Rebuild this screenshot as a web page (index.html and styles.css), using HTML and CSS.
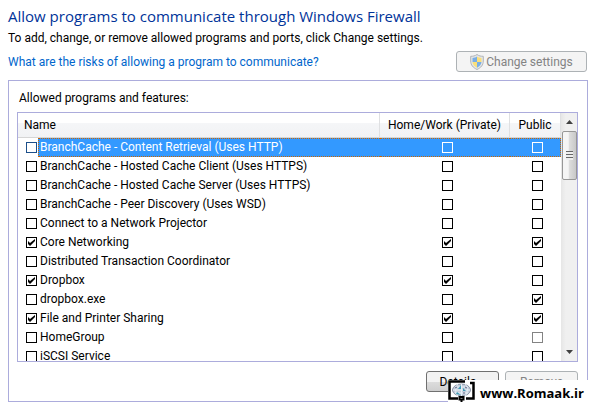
FILE: index.html
```html
<!DOCTYPE html>
<html lang="en">
<head>
    <meta charset="UTF-8">
    <meta name="viewport" content="width=device-width, initial-scale=1.0">
    <title>Allowed Programs</title>
    <link rel="stylesheet" href="styles.css">
</head>
<body>
    <main class="page">
        <h1>Allow programs to communicate through Windows Firewall</h1>
        <p class="intro">To add, change, or remove allowed programs and ports, click Change settings.</p>

        <div class="toolbar">
            <a class="help" href="#risks">What are the risks of allowing a program to communicate?</a>
            <button class="btn change" type="button" disabled>
                <svg class="shield" viewBox="0 0 14 16" aria-hidden="true">
                    <path d="M7 .5C5 2 3 2.300 .7 2.300V7c0 4 2.300 6.600 6.300 8.500 4-1.900 6.300-4.500 6.300-8.500V2.300C11 2.300 9 2 7 .5z" fill="#e4e6e8" stroke="#b0b4b8"/>
                    <path d="M7 2.500C5.500 3.500 4.200 3.800 2.500 3.900V8H7z" fill="#78aee6"/>
                    <path d="M7 2.500c1.500 1 2.800 1.300 4.500 1.400V8H7z" fill="#fbdf79"/>
                    <path d="M2.500 8H7v5.700C4.300 12.300 2.700 10.600 2.500 8z" fill="#fbdf79"/>
                    <path d="M11.500 8H7v5.700c2.700-1.400 4.300-3.100 4.500-5.700z" fill="#78aee6"/>
                </svg>
                <span>Change settings</span>
            </button>
        </div>

        <section class="panel">
            <h2 id="listTitle">Allowed programs and features:</h2>
            <div class="list">
                <table aria-labelledby="listTitle">
                    <thead>
                        <tr><th>Name</th><th class="private">Home/Work (Private)</th><th class="public">Public</th></tr>
                    </thead>
                    <tbody>
                        <tr class="selected">
                            <td><label><input type="checkbox"><span>BranchCache - Content Retrieval (Uses HTTP)</span></label></td>
                            <td><input type="checkbox" aria-label="Private"></td>
                            <td><input type="checkbox" aria-label="Public"></td>
                        </tr>
                        <tr>
                            <td><label><input type="checkbox"><span>BranchCache - Hosted Cache Client (Uses HTTPS)</span></label></td>
                            <td><input type="checkbox" aria-label="Private"></td>
                            <td><input type="checkbox" aria-label="Public"></td>
                        </tr>
                        <tr>
                            <td><label><input type="checkbox"><span>BranchCache - Hosted Cache Server (Uses HTTPS)</span></label></td>
                            <td><input type="checkbox" aria-label="Private"></td>
                            <td><input type="checkbox" aria-label="Public"></td>
                        </tr>
                        <tr>
                            <td><label><input type="checkbox"><span>BranchCache - Peer Discovery (Uses WSD)</span></label></td>
                            <td><input type="checkbox" aria-label="Private"></td>
                            <td><input type="checkbox" aria-label="Public"></td>
                        </tr>
                        <tr>
                            <td><label><input type="checkbox"><span>Connect to a Network Projector</span></label></td>
                            <td><input type="checkbox" aria-label="Private"></td>
                            <td><input type="checkbox" aria-label="Public"></td>
                        </tr>
                        <tr>
                            <td><label><input type="checkbox" checked><span>Core Networking</span></label></td>
                            <td><input type="checkbox" aria-label="Private" checked></td>
                            <td><input type="checkbox" aria-label="Public" checked></td>
                        </tr>
                        <tr>
                            <td><label><input type="checkbox"><span>Distributed Transaction Coordinator</span></label></td>
                            <td><input type="checkbox" aria-label="Private"></td>
                            <td><input type="checkbox" aria-label="Public"></td>
                        </tr>
                        <tr>
                            <td><label><input type="checkbox" checked><span>Dropbox</span></label></td>
                            <td><input type="checkbox" aria-label="Private" checked></td>
                            <td><input type="checkbox" aria-label="Public"></td>
                        </tr>
                        <tr>
                            <td><label><input type="checkbox"><span>dropbox.exe</span></label></td>
                            <td><input type="checkbox" aria-label="Private"></td>
                            <td><input type="checkbox" aria-label="Public" checked></td>
                        </tr>
                        <tr>
                            <td><label><input type="checkbox" checked><span>File and Printer Sharing</span></label></td>
                            <td><input type="checkbox" aria-label="Private" checked></td>
                            <td><input type="checkbox" aria-label="Public" checked></td>
                        </tr>
                        <tr>
                            <td><label><input type="checkbox"><span>HomeGroup</span></label></td>
                            <td><input type="checkbox" aria-label="Private"></td>
                            <td><input type="checkbox" aria-label="Public" disabled></td>
                        </tr>
                        <tr>
                            <td><label><input type="checkbox"><span>iSCSI Service</span></label></td>
                            <td><input type="checkbox" aria-label="Private"></td>
                            <td><input type="checkbox" aria-label="Public"></td>
                        </tr>
                    </tbody>
                </table>
                <div class="scrollbar" aria-hidden="true">
                    <svg class="arrow" viewBox="0 0 7 4"><path d="M0 4L3.500 0L7 4z"/></svg>
                    <div class="thumb"></div>
                    <svg class="arrow down" viewBox="0 0 7 4"><path d="M0 0L3.500 4L7 0z"/></svg>
                </div>
            </div>
            <div class="actions">
                <button class="btn" type="button">Details...</button>
                <button class="btn" type="button" disabled>Remove</button>
            </div>
        </section>

        <div class="watermark">
            <svg class="logo" viewBox="0 0 27 22" aria-hidden="true">
                <path d="M17 1.500H1.500V18.500H10M22 3H25.500V18.500H18" fill="none" stroke="#000" stroke-width="2.500"/>
                <ellipse cx="13.500" cy="10" rx="9" ry="6" fill="#c3ccda" stroke="#8993a5"/>
                <path d="M5 10h17M7 7h13M7 13h13M13.500 4v12M10 4c-3 3-3 9 0 12M17 4c3 3 3 9 0 12" fill="none" stroke="#e9f1f7"/>
                <path d="M13 5l-3 4h3zM15 8l3 3h-3zM9 12l4 3-5-1z" fill="#3e9cb6"/>
                <path d="M7 8l2-1M17 7l2 1M15 13l2 0" stroke="#5c6486"/>
                <path d="M11.500 17h4v2.500h-4zM13.500 19v3" fill="#fff" stroke="#000" stroke-width="2"/>
            </svg>
            <span>www.Romaak.ir</span>
        </div>
    </main>
</body>
</html>
```
FILE: styles.css
```css
* {
    box-sizing: border-box;
}
body {
    margin: 0;
    background: #fff;
    color: #000;
    font-family: Roboto, "Segoe UI", sans-serif;
    font-size: 12px;
    line-height: 18px;
}
.page {
    position: relative;
    min-height: 100vh;
    padding: 4px 5px 5px 8px;
}
h1 {
    margin: 0;
    color: #003399;
    font-family: "Open Sans", "Segoe UI", sans-serif;
    font-size: 15px;
    font-weight: normal;
    line-height: 24px;
}
.intro {
    margin: 1px 0 4px;
}
.toolbar {
    display: flex;
    justify-content: space-between;
    align-items: center;
    height: 21px;
    margin-right: 1px;
}
.help {
    color: #0066cc;
    text-decoration: none;
}
.btn {
    display: flex;
    justify-content: center;
    align-items: center;
    width: 73px;
    height: 21px;
    padding: 0;
    border: 1px solid #707070;
    border-radius: 3px;
    background: linear-gradient(#f2f2f2 50%, #dddddd 50%, #cfcfcf);
    color: #000;
    font: inherit;
}
.btn:disabled {
    border-color: #adb2b5;
    background: #f4f4f4;
    color: #838383;
}
.change {
    gap: 2px;
    width: 131px;
}
.shield {
    width: 14px;
    height: 16px;
}
.panel {
    margin-top: 8px;
    padding: 8px 9px 9px 8px;
    border: 1px solid #acacdc;
}
h2 {
    margin: 0 2px 5px;
    font-size: 12px;
    font-weight: normal;
    line-height: 18px;
}
.list {
    display: flex;
    height: 250px;
    border: 1px solid #acacdc;
    overflow: hidden;
}
table {
    flex: 1;
    align-self: flex-start;
    table-layout: fixed;
    border-spacing: 0;
}
th {
    height: 25px;
    padding: 0 6px;
    border-right: 1px solid #dfe0e2;
    border-bottom: 1px solid #d5d5d5;
    background: linear-gradient(#fff 40%, #f5f6f8 40%, #f1f2f4);
    font-weight: normal;
    text-align: left;
    white-space: nowrap;
}
.private {
    width: 130px;
    padding: 0;
    text-align: center;
}
.public {
    width: 51px;
    padding: 0;
    text-align: center;
}
td {
    height: 19px;
    padding: 0 0 0 4px;
    line-height: 19px;
}
td:first-child {
    padding-left: 8px;
}
label {
    display: flex;
    align-items: center;
}
label span {
    flex: 1;
    height: 19px;
    margin-left: 1px;
    padding-left: 2px;
    white-space: nowrap;
}
input {
    appearance: none;
    display: block;
    width: 11px;
    height: 11px;
    margin: 0 auto;
    border: 1px solid #000;
    background: #fff;
}
label input {
    margin: 0;
}
input:checked {
    background: #fff url("data:image/svg+xml,%3Csvg xmlns='http://www.w3.org/2000/svg' viewBox='0 0 9 9'%3E%3Cpath d='M1 3v3l2 2 5-5V1L3 5z'/%3E%3C/svg%3E");
}
input:disabled {
    border-color: #838383;
}
.selected td {
    border: 1px dotted #cc6600;
    border-width: 1px 0;
    background: #3399ff;
    color: #fff;
    line-height: 17px;
}
.selected td:first-child {
    border: 0;
    background: #fff;
}
.selected label span {
    padding-left: 1px;
    border: 1px dotted #cc6600;
    border-right: 0;
    background: #3399ff;
}
.selected td:last-child {
    border-right-width: 1px;
}
.selected input {
    border-color: #fff;
    background: #3399ff;
}
.selected label input {
    border-color: #1c4f8a;
    background: #fff;
}
.scrollbar {
    display: flex;
    flex-direction: column;
    align-items: center;
    width: 16px;
    padding: 7px 0;
    background: linear-gradient(90deg, #e6e6e6, #f0f0f0 30%, #f0f0f0);
}
.arrow {
    width: 7px;
    height: 4px;
    fill: #404040;
}
.down {
    margin-top: auto;
}
.thumb {
    width: 15px;
    height: 49px;
    margin-top: 7px;
    border: 1px solid #979797;
    border-radius: 2px;
    background:
        repeating-linear-gradient(#666 0 1px, #eee 1px 3px) center / 7px 9px no-repeat,
        linear-gradient(90deg, #f5f5f5 40%, #dcdcdc 50%, #c8c8c8);
}
.actions {
    display: flex;
    justify-content: flex-end;
    gap: 6px;
    margin-top: 9px;
}
.watermark {
    position: absolute;
    right: 0;
    bottom: 0;
    display: flex;
    gap: 5px;
    width: 145px;
    height: 27px;
    background: #fff;
    font-family: "Open Sans", "Segoe UI", sans-serif;
    font-size: 13px;
    font-weight: bold;
    line-height: 27px;
}
.logo {
    width: 27px;
    height: 22px;
}
```
